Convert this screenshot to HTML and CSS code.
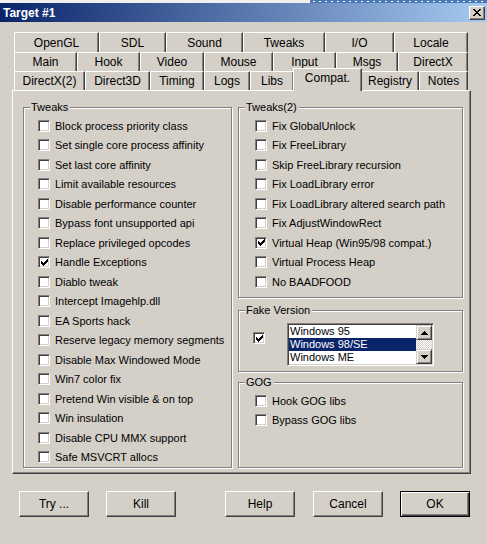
FILE: index.html
```html
<!DOCTYPE html>
<html lang="en">

<head>
    <meta charset="UTF-8">
    <title>Target #1</title>
    <link rel="stylesheet" href="styles.css">
</head>

<body>
    <div class="top-strip"><span class="task-band"></span></div>

    <div class="title-bar">
        <h1>Target #1</h1>
        <button class="close-btn" title="Close">
            <svg width="8" height="7" viewBox="0 0 8 7" shape-rendering="crispEdges">
                <path d="M0 0h2v1h-2zM6 0h2v1h-2zM1 1h2v1h-2zM5 1h2v1h-2zM2 2h4v1h-4zM3 3h2v1h-2zM2 4h4v1h-4zM1 5h2v1h-2zM5 5h2v1h-2zM0 6h2v1h-2zM6 6h2v1h-2z" fill="#000"/>
            </svg>
        </button>
    </div>

    <!-- Tab strip: three rows, the last one holds the open page -->
    <div class="tabs">
        <div class="tab-row row-1">
            <div class="tab">OpenGL</div>
            <div class="tab">SDL</div>
            <div class="tab">Sound</div>
            <div class="tab">Tweaks</div>
            <div class="tab">I/O</div>
            <div class="tab">Locale</div>
        </div>
        <div class="tab-row row-2">
            <div class="tab">Main</div>
            <div class="tab">Hook</div>
            <div class="tab">Video</div>
            <div class="tab">Mouse</div>
            <div class="tab">Input</div>
            <div class="tab">Msgs</div>
            <div class="tab">DirectX</div>
        </div>
        <div class="tab-row row-3">
            <div class="tab">DirectX(2)</div>
            <div class="tab">Direct3D</div>
            <div class="tab">Timing</div>
            <div class="tab">Logs</div>
            <div class="tab">Libs</div>
            <div class="tab active">Compat.</div>
            <div class="tab">Registry</div>
            <div class="tab">Notes</div>
        </div>
    </div>

    <div class="panel">
        <div class="group group-left">
            <div class="group-title">Tweaks</div>
            <div class="check-list">
                <label class="check"><span class="box"></span>Block process priority class</label>
                <label class="check"><span class="box"></span>Set single core process affinity</label>
                <label class="check"><span class="box"></span>Set last core affinity</label>
                <label class="check"><span class="box"></span>Limit available resources</label>
                <label class="check"><span class="box"></span>Disable performance counter</label>
                <label class="check"><span class="box"></span>Bypass font unsupported api</label>
                <label class="check"><span class="box"></span>Replace privileged opcodes</label>
                <label class="check"><span class="box checked"><svg width="7" height="7" viewBox="0 0 7 7" shape-rendering="crispEdges"><path d="M6 0h1v3h-1zM5 1h1v3h-1zM4 2h1v3h-1zM3 3h1v3h-1zM2 4h1v3h-1zM1 3h1v3h-1zM0 2h1v3h-1z" fill="#000"/></svg></span>Handle Exceptions</label>
                <label class="check"><span class="box"></span>Diablo tweak</label>
                <label class="check"><span class="box"></span>Intercept Imagehlp.dll</label>
                <label class="check"><span class="box"></span>EA Sports hack</label>
                <label class="check"><span class="box"></span>Reserve legacy memory segments</label>
                <label class="check"><span class="box"></span>Disable Max Windowed Mode</label>
                <label class="check"><span class="box"></span>Win7 color fix</label>
                <label class="check"><span class="box"></span>Pretend Win visible &amp; on top</label>
                <label class="check"><span class="box"></span>Win insulation</label>
                <label class="check"><span class="box"></span>Disable CPU MMX support</label>
                <label class="check"><span class="box"></span>Safe MSVCRT allocs</label>
            </div>
        </div>

        <div class="right-column">
            <div class="group group-tweaks2">
                <div class="group-title">Tweaks(2)</div>
                <div class="check-list">
                    <label class="check"><span class="box"></span>Fix GlobalUnlock</label>
                    <label class="check"><span class="box"></span>Fix FreeLibrary</label>
                    <label class="check"><span class="box"></span>Skip FreeLibrary recursion</label>
                    <label class="check"><span class="box"></span>Fix LoadLibrary error</label>
                    <label class="check"><span class="box"></span>Fix LoadLibrary altered search path</label>
                    <label class="check"><span class="box"></span>Fix AdjustWindowRect</label>
                    <label class="check"><span class="box checked"><svg width="7" height="7" viewBox="0 0 7 7" shape-rendering="crispEdges"><path d="M6 0h1v3h-1zM5 1h1v3h-1zM4 2h1v3h-1zM3 3h1v3h-1zM2 4h1v3h-1zM1 3h1v3h-1zM0 2h1v3h-1z" fill="#000"/></svg></span>Virtual Heap (Win95/98 compat.)</label>
                    <label class="check"><span class="box"></span>Virtual Process Heap</label>
                    <label class="check"><span class="box"></span>No BAADFOOD</label>
                </div>
            </div>

            <div class="group group-fake">
                <div class="group-title">Fake Version</div>
                <div class="fake-body">
                    <span class="box checked"><svg width="7" height="7" viewBox="0 0 7 7" shape-rendering="crispEdges"><path d="M6 0h1v3h-1zM5 1h1v3h-1zM4 2h1v3h-1zM3 3h1v3h-1zM2 4h1v3h-1zM1 3h1v3h-1zM0 2h1v3h-1z" fill="#000"/></svg></span>
                    <div class="listbox">
                        <ul class="list-items">
                            <li>Windows 95</li>
                            <li class="selected">Windows 98/SE</li>
                            <li>Windows ME</li>
                        </ul>
                        <div class="scrollbar">
                            <span class="scroll-btn"><svg width="7" height="4" viewBox="0 0 7 4" shape-rendering="crispEdges"><path d="M3 0h1v1h-1zM2 1h3v1h-3zM1 2h5v1h-5zM0 3h7v1h-7z" fill="#000"/></svg></span>
                            <span class="scroll-track"></span>
                            <span class="scroll-btn"><svg width="7" height="4" viewBox="0 0 7 4" shape-rendering="crispEdges"><path d="M0 0h7v1h-7zM1 1h5v1h-5zM2 2h3v1h-3zM3 3h1v1h-1z" fill="#000"/></svg></span>
                        </div>
                    </div>
                </div>
            </div>

            <div class="group group-gog">
                <div class="group-title">GOG</div>
                <div class="check-list">
                    <label class="check"><span class="box"></span>Hook GOG libs</label>
                    <label class="check"><span class="box"></span>Bypass GOG libs</label>
                </div>
            </div>
        </div>
    </div>

    <div class="button-row">
        <button class="btn">Try ...</button>
        <button class="btn btn-kill">Kill</button>
        <button class="btn btn-help">Help</button>
        <button class="btn btn-cancel">Cancel</button>
        <button class="btn btn-ok">OK</button>
    </div>
</body>

</html>
```

FILE: styles.css
```css
body {
    margin: 0;
    width: 487px;
    height: 544px;
    overflow: hidden;
    background-color: #d4d0c8;
    font-family: "Liberation Sans", Arial, sans-serif;
    font-size: 11px;
    color: #000;
}

/* strip of the desktop above the window */
.top-strip {
    height: 3px;
    display: flex;
    background-color: #f0f0f0;
}

.task-band {
    margin-left: auto;
    width: 176px;
    border-left: 1px solid #6d7f99;
    background-color: #4b79b8;
    background-image: radial-gradient(#ffffff 0.6px, transparent 0.8px);
    background-size: 6px 3px;
}

.title-bar {
    height: 19px;
    display: flex;
    align-items: center;
    justify-content: space-between;
    padding: 0 2px 0 3px;
    background: linear-gradient(to right, #0a246a, #a6caf0);
}

.title-bar h1 {
    margin: 0;
    font-size: 12px;
    font-weight: bold;
    color: #fff;
}

.close-btn {
    width: 16px;
    height: 14px;
    padding: 0;
    box-sizing: border-box;
    display: flex;
    align-items: center;
    justify-content: center;
    background-color: #d4d0c8;
    border: 1px solid;
    border-color: #fff #404040 #404040 #fff;
    box-shadow: inset -1px -1px #808080;
}

/* tabs */
.tabs {
    margin: 10px 0 0 14px;
    width: 454px;
    font-size: 12px;
}

.tab-row {
    display: grid;
    height: 19px;
}

.row-1 {
    height: 20px;
    grid-template-columns: 85px 67px 77px 82px 69px 74px;
}

.row-2 {
    grid-template-columns: 63px 63px 64px 69px 63px 62px 70px;
}

.row-3 {
    grid-template-columns: 71px 65px 54px 46px 44px 67px 58px 49px;
}

.tab {
    display: flex;
    align-items: center;
    justify-content: center;
    background-color: #d4d0c8;
    border-top: 1px solid #fff;
    border-left: 1px solid #fff;
    border-right: 1px solid #404040;
    box-shadow: inset -1px 0 #808080;
}

.tab.active {
    margin: -3px -1px -1px -1px;
    padding-bottom: 4px;
    position: relative;
    z-index: 1;
}

.panel {
    width: 459px;
    height: 384px;
    margin-left: 12px;
    box-sizing: border-box;
    border: 1px solid;
    border-color: #fff #404040 #404040 #fff;
    box-shadow: inset -1px -1px #808080;
    padding: 16px 0 0 10px;
    display: grid;
    grid-template-columns: 209px 225px;
    column-gap: 6px;
    align-items: start;
}

/* etched group boxes */
.group {
    box-sizing: border-box;
    border: 1px solid #808080;
    box-shadow: inset 1px 1px #fff, 1px 1px #fff;
}

.group-title {
    display: table;
    margin: -7px 0 2px 6px;
    padding: 0 2px 0 1px;
    line-height: 13px;
    background-color: #d4d0c8;
}

.group-left {
    height: 361px;
}

.group-left .check-list {
    padding-left: 14px;
}

.right-column {
    display: flex;
    flex-direction: column;
}

.right-column .check-list {
    padding-left: 16px;
}

.group-tweaks2 {
    height: 191px;
}

.group-fake {
    height: 62px;
    margin-top: 12px;
}

.group-gog {
    height: 86px;
    margin-top: 10px;
}

.check {
    height: 19.5px;
    display: flex;
    align-items: center;
    gap: 5px;
    white-space: nowrap;
}

.box {
    width: 12px;
    height: 12px;
    flex: none;
    box-sizing: border-box;
    display: flex;
    align-items: center;
    justify-content: center;
    background-color: #fff;
    border: 1px solid;
    border-color: #808080 #fff #fff #808080;
    box-shadow: inset 1px 1px #404040, inset -1px -1px #d4d0c8;
}

/* version picker */
.fake-body {
    display: flex;
    align-items: flex-start;
    padding-left: 14px;
}

.fake-body .box {
    margin-top: 13px;
}

.listbox {
    width: 147px;
    height: 43px;
    margin: 4px 0 0 22px;
    box-sizing: border-box;
    display: flex;
    background-color: #fff;
    border: 1px solid;
    border-color: #808080 #fff #fff #808080;
    box-shadow: inset 1px 1px #404040, inset -1px -1px #d4d0c8;
    padding: 1px;
}

.list-items {
    flex: 1;
    margin: 0;
    padding: 0;
    list-style: none;
    line-height: 13px;
}

.list-items li {
    padding-left: 1px;
}

.list-items .selected {
    background-color: #0a246a;
    color: #fff;
}

.scrollbar {
    width: 16px;
    display: flex;
    flex-direction: column;
}

.scroll-btn {
    height: 15px;
    box-sizing: border-box;
    display: flex;
    align-items: center;
    justify-content: center;
    background-color: #d4d0c8;
    border: 1px solid;
    border-color: #d4d0c8 #404040 #404040 #d4d0c8;
    box-shadow: inset 1px 1px #fff, inset -1px -1px #808080;
}

.scroll-track {
    flex: 1;
    background-image: repeating-conic-gradient(#d4d0c8 0 25%, #fff 0 50%);
    background-size: 2px 2px;
}

/* dialog buttons */
.button-row {
    display: flex;
    margin-top: 17px;
    padding-left: 19px;
}

.btn {
    width: 70px;
    height: 26px;
    padding: 0;
    box-sizing: border-box;
    font-family: "Liberation Sans", Arial, sans-serif;
    font-size: 12px;
    color: #000;
    background-color: #d4d0c8;
    border: 1px solid;
    border-color: #fff #404040 #404040 #fff;
    box-shadow: inset -1px -1px #808080;
}

.btn-kill {
    margin-left: 17px;
}

.btn-help {
    margin-left: 49px;
}

.btn-cancel {
    margin-left: 18px;
}

.btn-ok {
    margin-left: 17px;
    border-color: #000;
    box-shadow: inset 1px 1px #fff, inset -1px -1px #404040, inset -2px -2px #808080;
}
```
